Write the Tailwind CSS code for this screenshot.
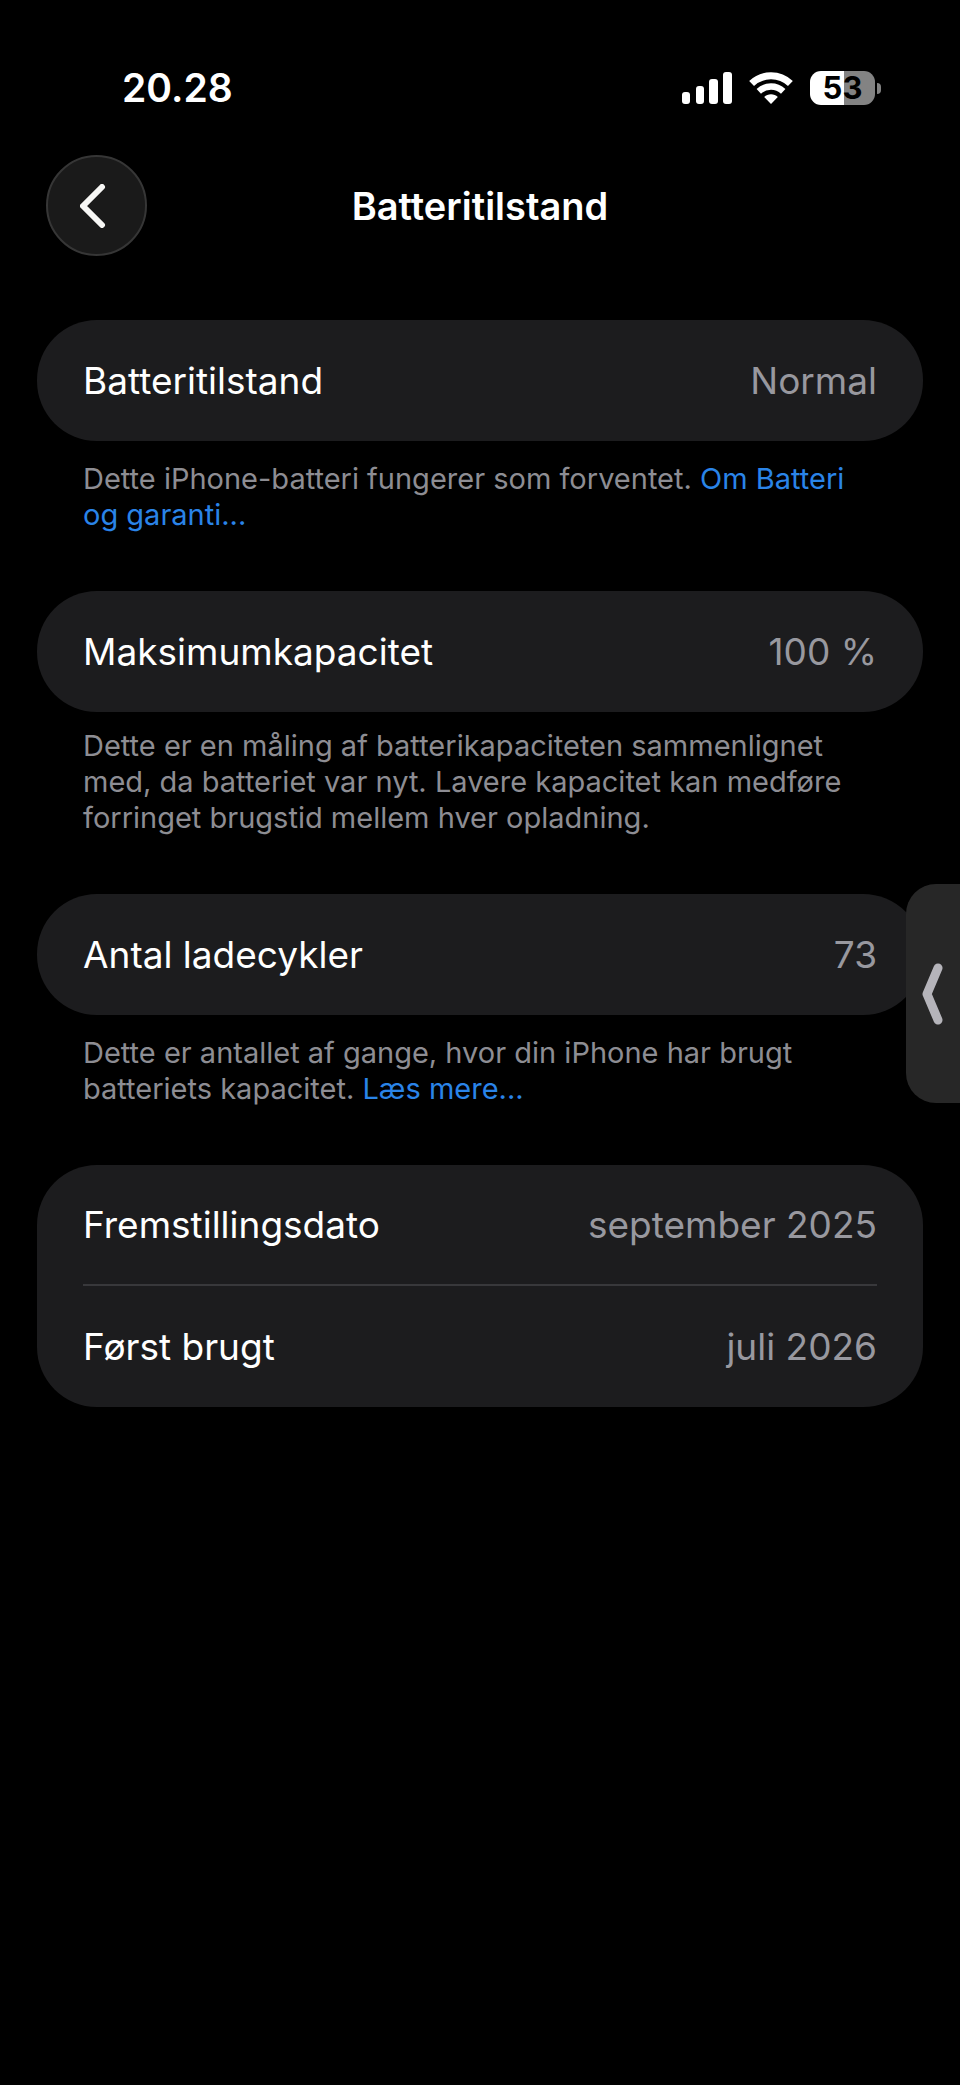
<!DOCTYPE html>
<html lang="da">
<head>
    <meta charset="UTF-8">
    <meta name="viewport" content="width=device-width, initial-scale=1.0">
    <title>Batteritilstand</title>
    <script src="https://cdn.jsdelivr.net/npm/@tailwindcss/browser@4"></script>
</head>
<body class="relative min-h-screen bg-black font-['Inter','Liberation_Sans',sans-serif] text-white">
    <!-- Status bar -->
    <div class="flex h-36 items-center justify-between pt-8 pr-[79px] pl-[122px]">
        <span class="text-[39px] leading-10 font-semibold">20.28</span>
        <div class="flex items-center gap-[17px]">
            <svg class="h-8 w-[50px]" viewBox="0 0 50 32" fill="#fff">
                <rect x="0" y="20" width="8" height="12" rx="3"/>
                <rect x="14" y="14" width="8" height="18" rx="3"/>
                <rect x="27" y="7" width="9" height="25" rx="3"/>
                <rect x="41" y="0" width="9" height="32" rx="3"/>
            </svg>
            <svg class="h-8 w-[44px]" viewBox="0 0 44 32" fill="none">
                <path d="M2.600 11.600A28 28 0 0 1 41.400 11.600" stroke="#fff" stroke-width="7"/>
                <path d="M9.800 19.300A18 18 0 0 1 34.200 19.300" stroke="#fff" stroke-width="6.500"/>
                <path d="M22 32l-6.800-7c3.500-3.600 10.100-3.600 13.600 0z" fill="#fff"/>
            </svg>
            <div class="flex items-center gap-[2px]">
                <div class="flex h-[34px] w-[65px] items-center justify-center rounded-[11px] bg-linear-to-r from-white from-53% to-[#838383] to-53%">
                    <span class="text-[31px] leading-8 font-bold text-black">53</span>
                </div>
                <div class="h-[11px] w-1 rounded-r-full bg-[#838383]"></div>
            </div>
        </div>
    </div>

    <!-- Header -->
    <header class="grid grid-cols-[101px_1fr_101px] items-center px-[46px] pt-[11px]">
        <button type="button" aria-label="Tilbage" class="flex size-[101px] items-center justify-center rounded-full border-2 border-[#363636] bg-[#1a1a1a]">
            <svg class="h-11 w-[34px]" viewBox="0 0 34 44" fill="none" stroke="#f7f7f5" stroke-width="6" stroke-linecap="round" stroke-linejoin="round">
                <path d="M22 3L3 22l19 19"/>
            </svg>
        </button>
        <h1 class="text-center text-[38px] leading-12 font-semibold">Batteritilstand</h1>
    </header>

    <!-- Content -->
    <main class="flex flex-col gap-[58px] px-[37px] pt-16">
        <section>
            <dl class="flex h-[121px] items-center justify-between rounded-[60px] bg-[#1c1c1e] px-[46px] text-[37px] leading-12">
                <dt>Batteritilstand</dt>
                <dd class="text-[#98989f]">Normal</dd>
            </dl>
            <p class="px-[46px] pt-5 text-[29px] leading-9 text-[#8d8d93]">Dette iPhone-batteri fungerer som forventet. <a href="#" class="text-[#2a84e8]">Om Batteri<br>og garanti...</a></p>
        </section>

        <section>
            <dl class="flex h-[121px] items-center justify-between rounded-[60px] bg-[#1c1c1e] px-[46px] text-[37px] leading-12">
                <dt>Maksimumkapacitet</dt>
                <dd class="text-[#98989f]">100 %</dd>
            </dl>
            <p class="px-[46px] pt-4 text-[29px] leading-9 text-[#8d8d93]">Dette er en måling af batterikapaciteten sammenlignet<br>med, da batteriet var nyt. Lavere kapacitet kan medføre<br>forringet brugstid mellem hver opladning.</p>
        </section>

        <section>
            <dl class="flex h-[121px] items-center justify-between rounded-[60px] bg-[#1c1c1e] px-[46px] text-[37px] leading-12">
                <dt>Antal ladecykler</dt>
                <dd class="text-[#98989f]">73</dd>
            </dl>
            <p class="px-[46px] pt-5 text-[29px] leading-9 text-[#8d8d93]">Dette er antallet af gange, hvor din iPhone har brugt<br>batteriets kapacitet. <a href="#" class="text-[#2a84e8]">Læs mere...</a></p>
        </section>

        <section>
            <dl class="rounded-[60px] bg-[#1c1c1e] px-[46px] text-[37px] leading-12">
                <div class="flex h-[121px] items-center justify-between border-b-2 border-[#38383b]">
                    <dt>Fremstillingsdato</dt>
                    <dd class="text-[#98989f]">september 2025</dd>
                </div>
                <div class="flex h-[121px] items-center justify-between">
                    <dt>Først brugt</dt>
                    <dd class="text-[#98989f]">juli 2026</dd>
                </div>
            </dl>
        </section>
    </main>

    <!-- Side tab, floats over the cards -->
    <button type="button" aria-label="Vis billede i billede" class="absolute top-[884px] right-0 flex h-[219px] w-[54px] items-center rounded-l-[30px] bg-[#272727] pl-4">
        <svg class="h-16 w-6" viewBox="0 0 24 64" fill="none" stroke="#b5b4ba" stroke-width="9" stroke-linecap="round" stroke-linejoin="round">
            <path d="M16 6L5 32l11 26"/>
        </svg>
    </button>
</body>
</html>
